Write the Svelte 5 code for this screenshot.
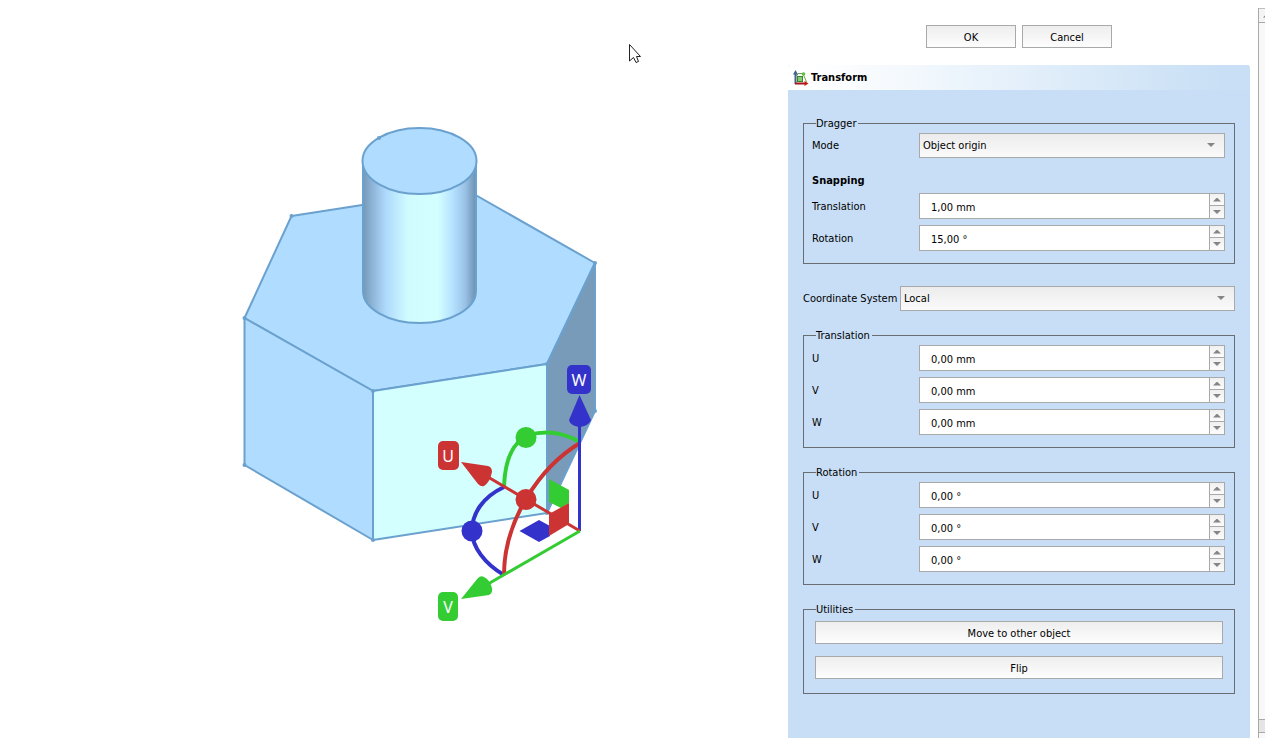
<script>
  let mode = $state('Object origin');
  let system = $state('Local');

  let snapping = $state([
    { id: 'snap-translation', label: 'Translation', value: '1,00', unit: 'mm' },
    { id: 'snap-rotation', label: 'Rotation', value: '15,00', unit: '°' }
  ]);
  let groups = $state([
    {
      title: 'Translation',
      fields: ['U', 'V', 'W'].map((label) => ({ id: 'translation-' + label, label, value: '0,00', unit: 'mm' }))
    },
    {
      title: 'Rotation',
      fields: ['U', 'V', 'W'].map((label) => ({ id: 'rotation-' + label, label, value: '0,00', unit: '°' }))
    }
  ]);

  function step(field, delta) {
    const n = parseFloat(field.value.replace(',', '.')) || 0;
    field.value = (n + delta).toFixed(2).replace('.', ',');
  }
  function edit(field, event) {
    const n = parseFloat(event.target.value.replace(',', '.')) || 0;
    field.value = n.toFixed(2).replace('.', ',');
  }
</script>

{#snippet spin(field)}
  <div class="row">
    <label for={field.id}>{field.label}</label>
    <div class="spin">
      <input id={field.id} type="text" value={field.value + ' ' + field.unit} onchange={(e) => edit(field, e)} />
      <div class="steps">
        <button type="button" aria-label="Increase" onclick={() => step(field, 1)}><i class="up"></i></button>
        <button type="button" aria-label="Decrease" onclick={() => step(field, -1)}><i class="down"></i></button>
      </div>
    </div>
  </div>
{/snippet}

<main>
  <section class="viewport">
    <svg viewBox="0 0 788 738" preserveAspectRatio="xMidYMin meet" role="img" aria-label="3D view">
      <defs>
        <linearGradient id="barrel">
          <stop offset="0" stop-color="#7397b6" />
          <stop offset="0.08" stop-color="#8db3d6" />
          <stop offset="0.2" stop-color="#aed9fc" />
          <stop offset="0.4" stop-color="#d0fcff" />
          <stop offset="0.66" stop-color="#d4ffff" />
          <stop offset="0.8" stop-color="#b4e0ff" />
          <stop offset="0.91" stop-color="#98c0e4" />
          <stop offset="1" stop-color="#6b8fae" />
        </linearGradient>
      </defs>

      <g stroke="#6aa1ce" stroke-width="2" stroke-linejoin="round">
        <path d="M244.5 318 291.5 216 465 189 595 263 547 364 373 391Z" fill="#b0dcff" />
        <path d="M244.5 318 373 391V540L244.5 465Z" fill="#b0dcff" />
        <path d="M547 364 595 263V411L547 513Z" fill="#789bb9" />
        <path d="M373 391 547 364V513L373 540Z" fill="#d4ffff" />
        <path d="M363 161V291A56.5 32 0 0 0 476 291V161Z" fill="url(#barrel)" />
        <ellipse cx="419.5" cy="161" rx="57" ry="33" fill="#b0dcff" />
      </g>
      <g fill="#6aa1ce">
        <circle cx="244.5" cy="318" r="2" /><circle cx="291.5" cy="216" r="2" />
        <circle cx="595" cy="263" r="2" /><circle cx="547" cy="364" r="2" />
        <circle cx="373" cy="391" r="2" /><circle cx="373" cy="540" r="2" />
        <circle cx="244.5" cy="465" r="2" /><circle cx="595" cy="411" r="2" />
        <circle cx="379" cy="138" r="2" /><circle cx="547" cy="513" r="2" />
      </g>

      <g fill="none" stroke-width="4">
        <path d="M504 487C505 457 514 441 529 435C546 430 564 433 580 442" stroke="#33cc33" />
        <path d="M504 487C483 497 472 513 472 531C472 547 485 564 504 575" stroke="#3333cc" />
        <path d="M580 443C540 467 504 520 504 575" stroke="#cc3333" />
      </g>
      <path d="M579.5 531V424" stroke="#3333cc" stroke-width="3" />
      <path d="M580 531 488 477" stroke="#cc3333" stroke-width="3" />
      <path d="M580 531 488 584" stroke="#33cc33" stroke-width="3" />
      <path d="M579.5 395 591 420C588 429 571 429 569 420Z" fill="#3333cc" />
      <path d="M461 462 488 466Q492 467 492 472Q490 482 484 486Q481 487 478 484Z" fill="#cc3333" />
      <path d="M461 599 478 578Q481 575 484 577Q490 580 492 588Q493 593 489 595Z" fill="#33cc33" />
      <circle cx="526" cy="437.5" r="10.5" fill="#33cc33" />
      <circle cx="526" cy="499.5" r="10.5" fill="#cc3333" />
      <circle cx="472" cy="531" r="10.5" fill="#3333cc" />
      <path d="M549 479 569 490V503L561 508 549 502Z" fill="#33cc33" />
      <path d="M519.5 531 539 520 550 526V536L539 542Z" fill="#3333cc" />
      <path d="M549 514 569 503V524L549 536Z" fill="#cc3333" />

      <rect x="567" y="365" width="24" height="29" rx="5" fill="#3333cc" />
      <rect x="438" y="441" width="21" height="29" rx="5" fill="#cc3333" />
      <rect x="438" y="592" width="20" height="29" rx="5" fill="#33cc33" />
      <g class="axis">
        <text x="579" y="386">W</text>
        <text x="448" y="462">U</text>
        <text x="448" y="613">V</text>
      </g>

      <path d="M629.5 44.5V61L633.5 57.5 636 62.5 638.5 61.5 636.5 56.5H640.5Z" fill="#fff" stroke="#222" stroke-width="1" />
    </svg>
  </section>

  <aside>
    <div class="tasks">
      <div class="actions">
        <button type="button">OK</button>
        <button type="button">Cancel</button>
      </div>

      <section class="panel">
        <h1>
          <svg width="16" height="16" viewBox="0 0 16 16" aria-hidden="true">
            <path d="M3.5 6 5 3.5 10 3.500 13.500 12" fill="none" stroke="#69a84a" />
            <rect x="4.500" y="6.500" width="5" height="5" fill="#83cf6c" stroke="#3e7d34" />
            <circle cx="10.500" cy="4" r="1.800" fill="#5cc13f" />
            <path d="M2.500 14V3" stroke="#41638c" stroke-width="2" />
            <path d="M0 4.500 2.500 0 5 4.500Z" fill="#41638c" />
            <path d="M2 13.500H13" stroke="#a51616" stroke-width="2" />
            <path d="M11.500 11 15.500 13.500 11.500 16Z" fill="#c41b1b" />
          </svg>
          Transform
        </h1>
        <form onsubmit={(e) => e.preventDefault()}>
          <fieldset>
            <legend>Dragger</legend>
            <div class="row">
              <label for="mode">Mode</label>
              <div class="combo">
                <select id="mode" bind:value={mode}>
                  <option>Object origin</option>
                </select>
                <i class="down"></i>
              </div>
            </div>
            <h2>Snapping</h2>
            {#each snapping as field (field.id)}
              {@render spin(field)}
            {/each}
          </fieldset>

          <div class="system">
            <label for="system">Coordinate System</label>
            <div class="combo">
              <select id="system" bind:value={system}>
                <option>Local</option>
              </select>
              <i class="down"></i>
            </div>
          </div>

          {#each groups as group (group.title)}
            <fieldset>
              <legend>{group.title}</legend>
              {#each group.fields as field (field.id)}
                {@render spin(field)}
              {/each}
            </fieldset>
          {/each}

          <fieldset class="utilities">
            <legend>Utilities</legend>
            <button type="button">Move to other object</button>
            <button type="button">Flip</button>
          </fieldset>
        </form>
      </section>
    </div>

    <div class="scrollbar" aria-hidden="true">
      <div class="end"><i class="up"></i></div>
      <div class="track"></div>
      <div class="thumb"></div>
      <div class="foot"></div>
    </div>
  </aside>
</main>

<style>
  :global(body) {
    margin: 0;
    background: #fff;
  }
  main,
  main * {
    box-sizing: border-box;
  }
  main {
    display: flex;
    height: 100vh;
    overflow: hidden;
    color: #000;
    font: 11px/15px 'DejaVu Sans Condensed', 'DejaVu Sans', sans-serif;
  }
  .viewport {
    flex: 1;
    min-width: 0;
  }
  .viewport svg {
    display: block;
    width: 100%;
    height: 100%;
  }
  .axis {
    fill: #fff;
    font: 16px 'Noto Sans', sans-serif;
    text-anchor: middle;
  }
  aside {
    display: flex;
    gap: 8px;
    flex: 0 0 477px;
  }
  .tasks {
    display: flex;
    flex-direction: column;
    flex: 1;
    min-width: 0;
  }
  .actions {
    display: flex;
    justify-content: center;
    gap: 6px;
    padding: 25px 0 17px;
  }
  .actions button {
    width: 90px;
  }
  button,
  input,
  select {
    margin: 0;
    color: inherit;
    font: inherit;
  }
  .actions button,
  .utilities button {
    height: 23px;
    padding: 2px 0 0;
    border: 1px solid #a9a9a9;
    background: linear-gradient(#eee, #fdfdfd);
  }
  .panel {
    flex: 1;
    border-radius: 3px 3px 0 0;
    background: #c8def6;
    overflow: hidden;
  }
  h1 {
    display: flex;
    align-items: center;
    gap: 2px;
    height: 25px;
    margin: 0;
    padding-left: 5px;
    background: linear-gradient(90deg, #fff 4%, #f2f8fd 28%, #c8dff5 94%);
    font: inherit;
    font-weight: bold;
  }
  form {
    padding: 26px 15px 0;
  }
  fieldset {
    display: flex;
    flex-direction: column;
    gap: 6px;
    min-width: 0;
    margin: 0 0 17px;
    padding: 2px 9px 12px 8px;
    border: 1px solid #696c70;
  }
  legend {
    margin-left: 4px;
    padding: 0 2px 0 0;
  }
  .row {
    display: flex;
    align-items: center;
  }
  .row label {
    flex: 0 0 107px;
  }
  h2 {
    margin: 0;
    padding: 10px 0 0;
    font: inherit;
    font-weight: bold;
    line-height: 13px;
  }
  .system {
    display: flex;
    align-items: center;
    margin: 22px 0 17px;
  }
  .system label {
    flex: 0 0 97px;
    white-space: nowrap;
  }
  .combo {
    position: relative;
    flex: 1;
    min-width: 0;
  }
  select {
    display: block;
    width: 100%;
    height: 25px;
    padding: 0 24px 0 3px;
    border: 1px solid #a9a9a9;
    border-radius: 0;
    background: linear-gradient(#ececec, #fafafa);
    appearance: none;
  }
  .up,
  .down {
    display: block;
    width: 8px;
    height: 4px;
    background: #858585;
    clip-path: polygon(0 100%, 50% 0, 100% 100%);
  }
  .down {
    clip-path: polygon(0 0, 100% 0, 50% 100%);
  }
  .combo .down {
    position: absolute;
    top: 10px;
    right: 10px;
    pointer-events: none;
  }
  .spin {
    display: flex;
    flex: 1;
    min-width: 0;
    height: 26px;
    border: 1px solid #a9a9a9;
    background: #fff;
  }
  .spin input {
    flex: 1;
    min-width: 0;
    padding: 2px 0 0 11px;
    border: 0;
    background: none;
  }
  .steps {
    display: grid;
    grid-template-rows: 11px 1fr;
    flex: 0 0 15px;
    border-left: 1px solid #a9a9a9;
  }
  .steps button {
    display: grid;
    place-items: center;
    padding: 0;
    border: 0;
    background: linear-gradient(#f0f0f0, #fbfbfb);
  }
  .steps button + button {
    border-top: 1px solid #a9a9a9;
  }
  .utilities {
    gap: 12px;
    padding: 4px 11px 14px;
  }
  .utilities legend {
    margin-left: 1px;
  }
  .scrollbar {
    display: flex;
    flex-direction: column;
    flex: 0 0 7px;
    margin-top: 8px;
    border-left: 1px solid #a9a9a9;
    overflow: hidden;
    background: #f8f8f8;
  }
  .end {
    display: grid;
    align-items: center;
    padding-left: 4px;
    height: 15px;
    border-top: 1px solid #c0c0c0;
    border-bottom: 1px solid #a9a9a9;
    background: #f4f4f4;
  }
  .track {
    flex: 1;
  }
  .thumb {
    height: 14px;
    border: solid #a9a9a9;
    border-width: 1px 0;
    background: #e5e5e5;
  }
  .foot {
    height: 5px;
  }
</style>
